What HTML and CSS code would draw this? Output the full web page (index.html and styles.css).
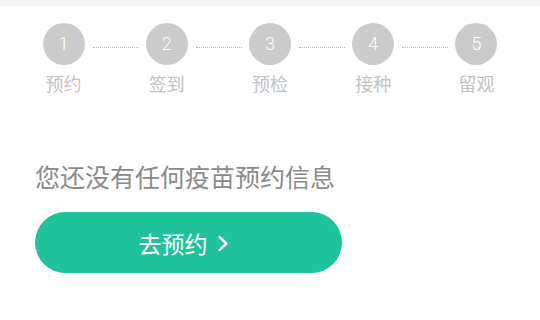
FILE: index.html
```html
<!DOCTYPE html>
<html lang="zh">
<head>
<meta charset="utf-8">
<link rel="stylesheet" href="styles.css">
</head>
<body>
<div class="topband"></div>
<div class="steps">
  <div class="step"><div class="circle">1</div><div class="label">预约</div></div>
  <div class="step"><div class="circle">2</div><div class="label">签到</div></div>
  <div class="step"><div class="circle">3</div><div class="label">预检</div></div>
  <div class="step"><div class="circle">4</div><div class="label">接种</div></div>
  <div class="step"><div class="circle">5</div><div class="label">留观</div></div>
</div>
<div class="content">
  <div class="message">您还没有任何疫苗预约信息</div>
  <div class="button">去预约<svg class="chev" width="12" height="17" viewBox="0 0 12 17"><path d="M2.5 2 L9.5 8.5 L2.5 15" fill="none" stroke="#ffffff" stroke-width="2.4" stroke-linecap="round" stroke-linejoin="round"/></svg></div>
</div>
</body>
</html>
```
FILE: styles.css
```css
html, body {
  margin: 0;
  padding: 0;
  background: #ffffff;
  font-family: "Noto Sans CJK SC", "Noto Sans", sans-serif;
}
.topband {
  height: 6px;
  background: #f5f5f5;
}
.steps {
  display: grid;
  grid-template-columns: repeat(5, 1fr);
  padding: 17px 12px 0;
}
.step {
  position: relative;
  display: flex;
  flex-direction: column;
  align-items: center;
}
.step:not(:last-child)::after {
  content: "";
  position: absolute;
  top: 24px;
  left: calc(50% + 29px);
  width: calc(100% - 57px);
  border-top: 1px dotted #b8b8b8;
}
.circle {
  width: 42px;
  height: 42px;
  border-radius: 50%;
  background: #cbcbcb;
  color: #ffffff;
  font-family: "Roboto", sans-serif;
  font-weight: 300;
  font-size: 18px;
  line-height: 42px;
  text-align: center;
}
.label {
  margin-top: 5px;
  font-size: 18px;
  line-height: 26px;
  color: #c2c2c2;
}
.content {
  padding: 0 35px;
}
.message {
  margin-top: 63px;
  font-size: 25px;
  line-height: 34px;
  color: #8a8a8a;
}
.button {
  box-sizing: border-box;
  margin-top: 19px;
  width: 307px;
  height: 61px;
  padding-right: 10px;
  border-radius: 31px;
  background: #1fc39b;
  color: #ffffff;
  font-size: 23px;
  display: flex;
  align-items: center;
  justify-content: center;
}
.chev {
  margin-left: 9px;
  margin-top: 2px;
}
```
